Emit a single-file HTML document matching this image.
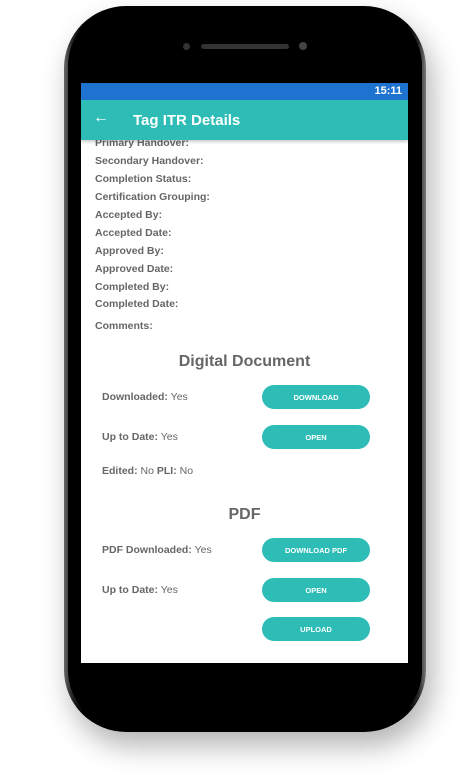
<!DOCTYPE html>
<html><head><style>
body{margin:0;width:470px;height:780px;background:#fff;position:relative;overflow:hidden;font-family:"Liberation Sans",sans-serif}
.body{position:absolute;left:64px;top:6px;width:362px;height:726px;border-radius:62px;background:linear-gradient(90deg,#666 0,#2a2a2a 2%,#000 5%,#000 95%,#2a2a2a 98%,#777 100%);box-shadow:6px 14px 28px rgba(0,0,0,0.3)}
.inner{position:absolute;left:68px;top:8px;width:354px;height:720px;border-radius:58px;background:#000}
.screen{position:absolute;left:81px;top:83px;width:327px;height:580px;background:#fff;overflow:hidden}
.sb{height:17px;background:#1f73d0;color:#fff;font-size:11px;font-weight:bold;text-align:right;padding-right:6px;line-height:17px}
.tb{height:40px;background:#2dbdb6;color:#fff;font-size:15px;font-weight:bold;line-height:42px;position:relative;box-shadow:0 2px 3px rgba(0,0,0,.2);z-index:2}
.tb span{position:absolute;left:52px}
.tb b{position:absolute;left:12px;top:-3px;font-size:16px}
.r{position:absolute;left:14px;font-size:10.5px;font-weight:bold;color:#666}
.l{position:absolute;left:21px;font-size:10.5px;color:#666}
.l b{color:#666}
.h{position:absolute;left:0;width:327px;text-align:center;font-size:16px;font-weight:bold;color:#666}
.btn{position:absolute;left:181px;width:108px;height:24px;border-radius:12px;background:#2dbdb6;color:#fff;font-size:7.5px;font-weight:bold;text-align:center;line-height:26px}
</style></head><body>
<div class="body"></div>
<div class="inner"></div>
<div style="position:absolute;left:183px;top:43px;width:7px;height:7px;border-radius:50%;background:#333"></div>
<div style="position:absolute;left:201px;top:44px;width:88px;height:5px;border-radius:3px;background:#333"></div>
<div style="position:absolute;left:299px;top:42px;width:8px;height:8px;border-radius:50%;background:#444"></div>
<div class="screen">
<div class="sb">15:11</div>
<div class="tb"><b>&#8592;</b><span>Tag ITR Details</span></div>
<div class="r" style="top:54px">Primary Handover:</div>
<div class="r" style="top:72px">Secondary Handover:</div>
<div class="r" style="top:90px">Completion Status:</div>
<div class="r" style="top:108px">Certification Grouping:</div>
<div class="r" style="top:126px">Accepted By:</div>
<div class="r" style="top:144px">Accepted Date:</div>
<div class="r" style="top:162px">Approved By:</div>
<div class="r" style="top:180px">Approved Date:</div>
<div class="r" style="top:198px">Completed By:</div>
<div class="r" style="top:215px">Completed Date:</div>
<div class="r" style="top:237px">Comments:</div>
<div class="h" style="top:270px">Digital Document</div>
<div class="l" style="top:308px"><b>Downloaded:</b> Yes</div>
<div class="btn" style="top:302px">DOWNLOAD</div>
<div class="l" style="top:348px"><b>Up to Date:</b> Yes</div>
<div class="btn" style="top:342px">OPEN</div>
<div class="l" style="top:382px"><b>Edited:</b> No <b>PLI:</b> No</div>
<div class="h" style="top:423px">PDF</div>
<div class="l" style="top:461px"><b>PDF Downloaded:</b> Yes</div>
<div class="btn" style="top:455px">DOWNLOAD PDF</div>
<div class="l" style="top:501px"><b>Up to Date:</b> Yes</div>
<div class="btn" style="top:495px">OPEN</div>
<div class="btn" style="top:534px">UPLOAD</div>
</div>
</body></html>
